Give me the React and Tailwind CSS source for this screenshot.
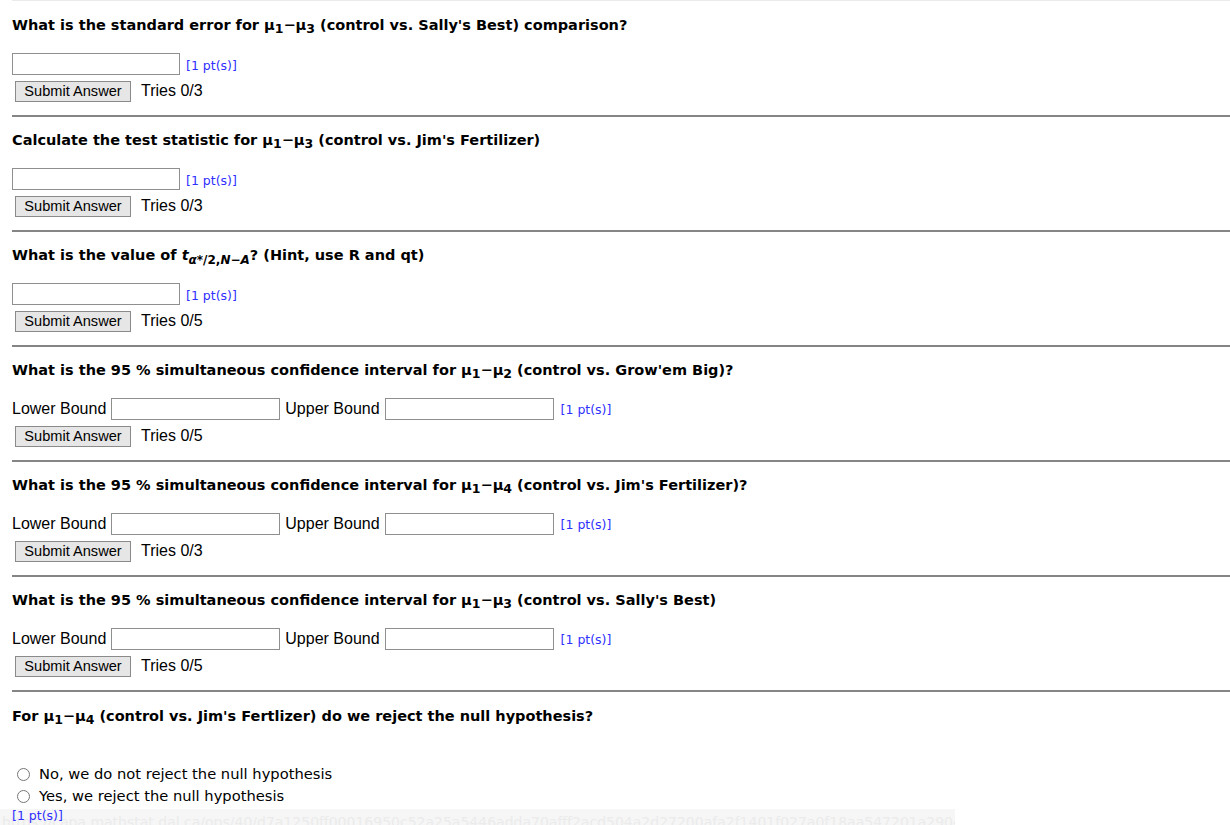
import React from "react";

const heading = "h-[20px] font-['DejaVu_Sans',sans-serif] font-bold text-[14.5px] leading-[20px] text-black whitespace-nowrap";
const arial = "font-['Liberation_Sans',Arial,sans-serif]";

function Mu({ n }) {
  return (
    <span>
      μ<span className="text-[12.5px] leading-none align-[-3px]">{n}</span>
    </span>
  );
}

function Pair({ a, b }) {
  return (
    <span>
      <Mu n={a} />−<Mu n={b} />
    </span>
  );
}

function Points() {
  return (
    <span className="font-['DejaVu_Sans',sans-serif] text-[12.5px] text-[#2f2fff]">[1 pt(s)]</span>
  );
}

function TextBox({ w = "w-[168px]" }) {
  return <input type="text" className={`${w} h-[22px] border border-[#8f8f8f] bg-white px-1 block`} />;
}

function SubmitRow({ tries }) {
  return (
    <div className={`mt-[5px] h-[22px] flex items-center ${arial} text-[16px]`}>
      <button className="ml-[3px] w-[116px] h-[21px] border border-[#8a8a8a] bg-[#e6e6e6] text-[14.6px] leading-none text-black">
        Submit Answer
      </button>
      <span className="ml-[10px] text-black">Tries {tries}</span>
    </div>
  );
}

function Section({ first, title, bounds, tries }) {
  return (
    <div className="h-[115px] pb-[12px]">
      {first ? (
        <div className="h-[1px] bg-[#ebebeb]" />
      ) : (
        <div className="h-[2px] bg-[#858585]" />
      )}
      <h3 className={`${first ? "mt-[14px]" : "mt-[13px]"} ${heading}`}>{title}</h3>
      {bounds ? (
        <div className={`mt-[18px] h-[22px] flex items-center ${arial} text-[16px] text-black`}>
          <span>Lower Bound</span>
          <span className="ml-[5px]"><TextBox w="w-[169px]" /></span>
          <span className="ml-[5px]">Upper Bound</span>
          <span className="ml-[5px]"><TextBox w="w-[169px]" /></span>
          <span className="ml-[7px]"><Points /></span>
        </div>
      ) : (
        <div className="mt-[18px] h-[22px] flex items-center">
          <TextBox />
          <span className="ml-[6px]"><Points /></span>
        </div>
      )}
      <SubmitRow tries={tries} />
    </div>
  );
}

export default function App() {
  const sections = [
    {
      title: (
        <>
          What is the standard error for <Pair a="1" b="3" /> (control vs. Sally's Best) comparison?
        </>
      ),
      tries: "0/3",
    },
    {
      title: (
        <>
          Calculate the test statistic for <Pair a="1" b="3" /> (control vs. Jim's Fertilizer)
        </>
      ),
      tries: "0/3",
    },
    {
      title: (
        <>
          What is the value of{" "}
          <span className="italic">t</span>
          <span className="text-[12px] leading-none align-[-4px]">
            <span className="italic">α</span>*/2,<span className="italic">N</span>−<span className="italic">A</span>
          </span>
          ? (Hint, use R and qt)
        </>
      ),
      tries: "0/5",
    },
    {
      title: (
        <>
          What is the 95 % simultaneous confidence interval for <Pair a="1" b="2" /> (control vs. Grow'em Big)?
        </>
      ),
      bounds: true,
      tries: "0/5",
    },
    {
      title: (
        <>
          What is the 95 % simultaneous confidence interval for <Pair a="1" b="4" /> (control vs. Jim's Fertilizer)?
        </>
      ),
      bounds: true,
      tries: "0/3",
    },
    {
      title: (
        <>
          What is the 95 % simultaneous confidence interval for <Pair a="1" b="3" /> (control vs. Sally's Best)
        </>
      ),
      bounds: true,
      tries: "0/5",
    },
  ];

  return (
    <div className="h-[825px] bg-white relative overflow-hidden">
      <div className="pl-[12px]">
        {sections.map((s, i) => (
          <Section key={i} first={i === 0} {...s} />
        ))}

        {/* last question */}
        <div>
          <div className="h-[2px] bg-[#858585]" />
          <h3 className={`mt-[14px] ${heading}`}>
            For <Pair a="1" b="4" /> (control vs. Jim's Fertlizer) do we reject the null hypothesis?
          </h3>
          <div className="mt-[37px] font-['DejaVu_Sans',sans-serif] text-[14.7px] text-black">
            {["No, we do not reject the null hypothesis", "Yes, we reject the null hypothesis"].map((t) => (
              <label key={t} className="h-[22px] flex items-center">
                <span className="ml-[5px] w-[13px] h-[13px] rounded-full border border-[#767676] bg-white" />
                <span className="ml-[9px]">{t}</span>
              </label>
            ))}
          </div>
          <div className="relative z-10 h-[18px] flex items-center">
            <Points />
          </div>
        </div>
      </div>

      {/* browser status bar */}
      <div className="absolute bottom-0 left-0 w-[955px] h-[16px] bg-[#f6f6f6] overflow-hidden">
        <div className="pl-[2px] pt-[4px] font-['DejaVu_Sans',sans-serif] text-[14px] leading-[18px] text-[#ebebeb] whitespace-nowrap">
          https://capa.mathstat.dal.ca/ops/40/d7a1250ff00016950c52a25a5446adda70afff2acd504a2d27200afa2f1401f027a0f18aa547201a2904c587611b1
        </div>
      </div>
    </div>
  );
}
